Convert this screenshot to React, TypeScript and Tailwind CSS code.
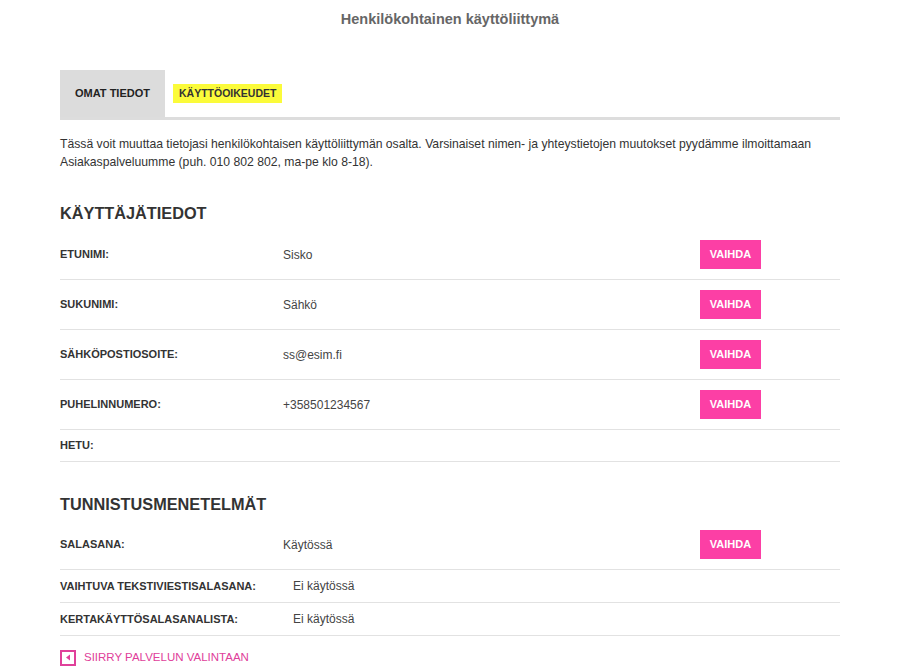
import React from 'react';

type Row = { label: string; value?: string; action?: boolean };

const userRows: Row[] = [
  { label: 'ETUNIMI:', value: 'Sisko', action: true },
  { label: 'SUKUNIMI:', value: 'Sähkö', action: true },
  { label: 'SÄHKÖPOSTIOSOITE:', value: 'ss@esim.fi', action: true },
  { label: 'PUHELINNUMERO:', value: '+358501234567', action: true },
];

const authRows: Row[] = [
  { label: 'VAIHTUVA TEKSTIVIESTISALASANA:', value: 'Ei käytössä' },
  { label: 'KERTAKÄYTTÖSALASANALISTA:', value: 'Ei käytössä' },
];

function ChangeButton() {
  return (
    <button className="w-[61px] h-[29px] bg-[#fc3fa5] text-white text-[11px] font-bold">
      VAIHDA
    </button>
  );
}

function InfoRow({ row }: { row: Row }) {
  return (
    <div className="flex items-center h-[50px] border-b border-[#e2e2e2]">
      <div className="w-[223px] text-[11px] font-bold text-[#333]">{row.label}</div>
      <div className="flex-1 text-[12px] text-[#444]">{row.value}</div>
      <div className="w-[140px]">{row.action && <ChangeButton />}</div>
    </div>
  );
}

function SmallRow({ row }: { row: Row }) {
  return (
    <div className="flex items-center h-[33px] border-b border-[#e2e2e2]">
      <div className="w-[233px] text-[11px] font-bold text-[#333]">{row.label}</div>
      <div className="flex-1 text-[12px] text-[#444]">{row.value}</div>
    </div>
  );
}

export default function App() {
  return (
    <div className="min-h-[669px] bg-white font-['Liberation_Sans',Arial,sans-serif]">
      <div className="w-[780px] mx-auto pt-[10px]">
        <h1 className="text-center text-[14.5px] font-bold text-[#666] h-[18px] leading-[18px]">
          Henkilökohtainen käyttöliittymä
        </h1>

        {/* Tabs */}
        <div className="mt-[42px] flex border-b-[3px] border-[#dddddd]">
          <div className="w-[105px] h-[47px] bg-[#dcdcdc] flex items-center justify-center text-[11px] font-bold text-[#222]">
            OMAT TIEDOT
          </div>
          <div className="h-[47px] flex items-center pl-[8px]">
            <span className="bg-[#fbfb3a] px-[6px] py-[2px] text-[10.5px] font-bold text-[#333]">
              KÄYTTÖOIKEUDET
            </span>
          </div>
        </div>

        <p className="mt-[15px] text-[12.2px] leading-[18px] text-[#333]">
          Tässä voit muuttaa tietojasi henkilökohtaisen käyttöliittymän osalta. Varsinaiset nimen- ja yhteystietojen muutokset pyydämme ilmoittamaan Asiakaspalveluumme (puh. 010 802 802, ma-pe klo 8-18).
        </p>

        <h2 className="mt-[31px] text-[16.3px] font-bold text-[#333] leading-[22px]">KÄYTTÄJÄTIEDOT</h2>
        <div className="mt-[6px]">
          {userRows.map((r) => (
            <InfoRow key={r.label} row={r} />
          ))}
          <div className="flex items-center h-[32px] border-b border-[#e2e2e2]">
            <div className="text-[11px] font-bold text-[#333]">HETU:</div>
          </div>
        </div>

        <h2 className="mt-[31px] text-[16.3px] font-bold text-[#333] leading-[22px]">TUNNISTUSMENETELMÄT</h2>
        <div className="mt-[5px]">
          <InfoRow row={{ label: 'SALASANA:', value: 'Käytössä', action: true }} />
          {authRows.map((r) => (
            <SmallRow key={r.label} row={r} />
          ))}
        </div>

        <a href="#" className="mt-[13px] flex items-center gap-[8px] text-[11.5px] text-[#e0409a]">
          <span className="w-[16px] h-[16px] border-2 border-[#e0409a] flex items-center justify-center">
            <svg width="6" height="7" viewBox="0 0 6 7">
              <path d="M5 0.5 L1 3.5 L5 6.5 Z" fill="#e0409a" />
            </svg>
          </span>
          SIIRRY PALVELUN VALINTAAN
        </a>
      </div>
    </div>
  );
}
